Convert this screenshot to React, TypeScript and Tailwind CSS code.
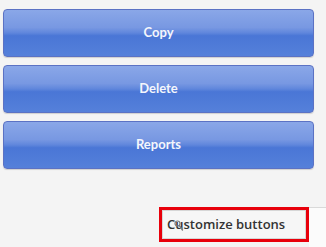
import React from 'react'

const actions = ['Copy', 'Delete', 'Reports']

function BlueButton({ label }: { label: string }) {
  return (
    <button
      type="button"
      className="h-[48px] w-full rounded-[4px] border border-[#5b72c4] bg-[linear-gradient(to_bottom,#8aa7e8_0%,#7898e2_38%,#5f86dc_50%,#4a76d6_56%,#5580da_100%)] text-[13px] font-bold text-[#f4f6fc] shadow-[0_1px_1px_rgba(0,0,0,0.15)]"
    >
      {label}
    </button>
  )
}

export default function App() {
  return (
    <div className="h-[247px] w-[326px] overflow-hidden bg-[#f4f4f4] font-['Lato',sans-serif]">
      <div className="flex flex-col gap-2 pl-[3px] pr-3 pt-[9px]">
        {actions.map((a) => (
          <BlueButton key={a} label={a} />
        ))}
      </div>

      <div className="mt-[38px] flex h-[40px]">
        <div className="w-[159px]" />
        <div className="relative h-[35px] w-[150px] border-[3px] border-[#e8000b] bg-[#f6f6f6]">
          <div className="flex h-full items-center border border-[#d6d6d6] pl-[4px] font-['Open_Sans',sans-serif] text-[13px] font-semibold text-[#333333]">
            Customize buttons
          </div>
          <svg className="absolute left-[12px] top-[10px]" width="10" height="12" viewBox="0 0 10 12">
            <circle cx="3.5" cy="3.5" r="2.5" fill="none" stroke="#7a7a7a" strokeWidth="1.2" />
            <path d="M5.3 5.5 L8.5 10" stroke="#7a7a7a" strokeWidth="1.4" strokeLinecap="round" />
          </svg>
        </div>
        <div className="flex-1 border-t border-[#d9d9d9] bg-[#fbfbfb]" />
      </div>
    </div>
  )
}
